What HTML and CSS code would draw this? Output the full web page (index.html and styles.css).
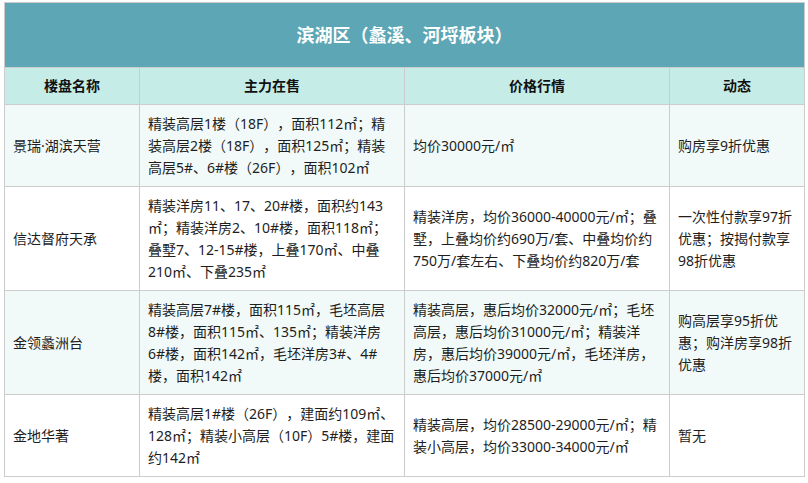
FILE: index.html
```html
<!DOCTYPE html>
<html lang="zh-CN">
<head>
<meta charset="utf-8">
<link rel="stylesheet" href="styles.css">
</head>
<body>
<div class="wrap">
<table class="tbl">
  <colgroup>
    <col class="c1"><col class="c2"><col class="c3"><col class="c4">
  </colgroup>
  <thead>
    <tr class="title-row"><th colspan="4">滨湖区（蠡溪、河埒板块）</th></tr>
    <tr class="head-row"><th>楼盘名称</th><th>主力在售</th><th>价格行情</th><th>动态</th></tr>
  </thead>
  <tbody>
    <tr class="alt">
      <td>景瑞·湖滨天营</td>
      <td>精装高层1楼（18F），面积112㎡；精<br>装高层2楼（18F），面积125㎡；精装<br>高层5#、6#楼（26F），面积102㎡</td>
      <td>均价30000元/㎡</td>
      <td>购房享9折优惠</td>
    </tr>
    <tr>
      <td>信达督府天承</td>
      <td>精装洋房11、17、20#楼，面积约143<br>㎡；精装洋房2、10#楼，面积118㎡；<br>叠墅7、12-15#楼，上叠170㎡、中叠<br>210㎡、下叠235㎡</td>
      <td>精装洋房，均价36000-40000元/㎡；叠<br>墅，上叠均价约690万/套、中叠均价约<br>750万/套左右、下叠均价约820万/套</td>
      <td>一次性付款享97折<br>优惠；按揭付款享<br>98折优惠</td>
    </tr>
    <tr class="alt">
      <td>金领蠡洲台</td>
      <td>精装高层7#楼，面积115㎡，毛坯高层<br>8#楼，面积115㎡、135㎡；精装洋房<br>6#楼，面积142㎡，毛坯洋房3#、4#<br>楼，面积142㎡</td>
      <td>精装高层，惠后均价32000元/㎡；毛坯<br>高层，惠后均价31000元/㎡；精装洋<br>房，惠后均价39000元/㎡，毛坯洋房，<br>惠后均价37000元/㎡</td>
      <td>购高层享95折优<br>惠；购洋房享98折<br>优惠</td>
    </tr>
    <tr>
      <td>金地华著</td>
      <td>精装高层1#楼（26F），建面约109㎡、<br>128㎡；精装小高层（10F）5#楼，建面<br>约142㎡</td>
      <td>精装高层，均价28500-29000元/㎡；精<br>装小高层，均价33000-34000元/㎡</td>
      <td>暂无</td>
    </tr>
  </tbody>
</table>
</div>
</body>
</html>
```
FILE: styles.css
```css
html, body {
  margin: 0;
  padding: 0;
  background: #ffffff;
}
.wrap {
  padding: 2px 0 0 4px;
}
.tbl {
  border-collapse: collapse;
  table-layout: fixed;
  width: 800px;
  font-family: "Noto Sans", "Noto Sans CJK SC", sans-serif;
  font-size: 14px;
  line-height: 22px;
  color: #1e1e1e;
  text-spacing-trim: space-all;
}
.c1 { width: 135px; }
.c2 { width: 265px; }
.c3 { width: 265px; }
.c4 { width: 135px; }
.tbl th, .tbl td {
  border: 1px solid #cccccc;
  padding: 8px 6px 7px 8px;
  vertical-align: middle;
  text-align: left;
  white-space: nowrap;
  overflow: hidden;
}
.title-row th {
  background: #5ca6b5;
  color: #ffffff;
  font-size: 18px;
  font-weight: bold;
  text-align: center;
  line-height: 64px;
  padding: 0;
}
.head-row th {
  background: #c6ece7;
  color: #111111;
  font-weight: bold;
  text-align: center;
  line-height: 36px;
  padding: 0 8px;
}
.tbl tbody tr.alt td {
  background: #f1faf9;
}
```
